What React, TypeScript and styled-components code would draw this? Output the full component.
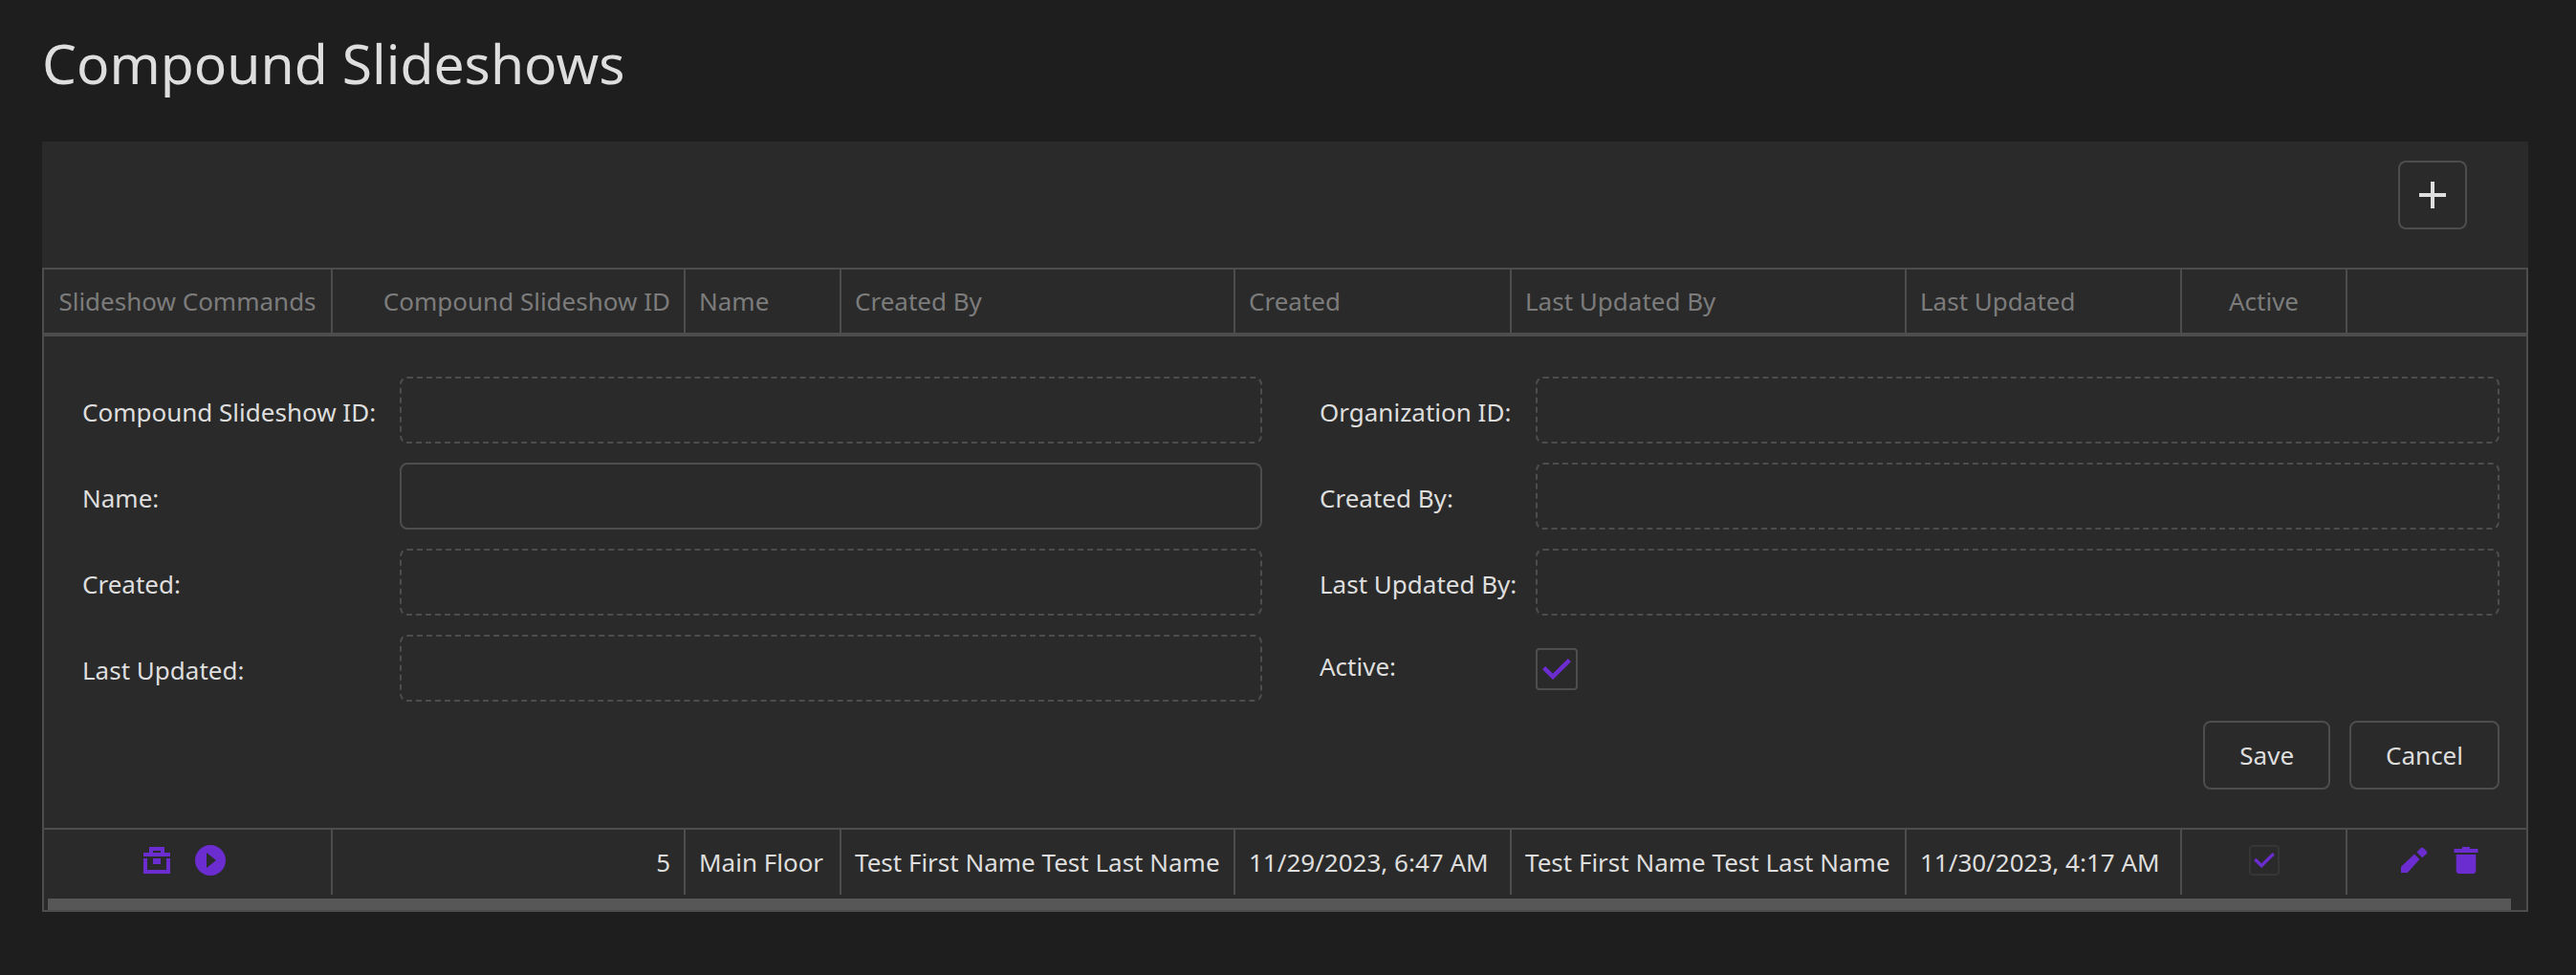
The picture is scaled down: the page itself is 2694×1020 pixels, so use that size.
import React, { useId } from "react";
import styled, { createGlobalStyle } from "styled-components";

const color = {
  page: "#1e1e1e",
  panel: "#2a2a2a",
  line: "#4d4d4d",
  faint: "#363636",
  text: "#dedede",
  muted: "#7c7c7c",
  accent: "#6b2dcf",
  thumb: "#575757",
};

const GlobalStyle = createGlobalStyle`
  *, *::before, *::after { box-sizing: border-box; }
  body {
    margin: 0;
    min-height: 100vh;
    background: ${color.page};
    color: ${color.text};
    font-family: "Noto Sans", "Open Sans", sans-serif;
    font-size: 26px;
    line-height: 36px;
  }
`;

const Page = styled.main`
  padding: 26px 50px 66px 44px;
`;

const Title = styled.h1`
  margin: 0 0 42px;
  font-size: 57px;
  line-height: 80px;
  font-weight: 400;
`;

const GridPanel = styled.section`
  background: ${color.panel};
`;

const Toolbar = styled.div`
  display: flex;
  justify-content: flex-end;
  padding: 20px 64px 40px;
`;

const Button = styled.button<{ $icon?: boolean }>`
  display: inline-flex;
  align-items: center;
  justify-content: center;
  height: 72px;
  ${(p) => (p.$icon ? "width: 72px; padding: 0;" : "padding: 0 36px;")}
  border: 2px solid ${color.line};
  border-radius: 8px;
  background: transparent;
  color: inherit;
  font: inherit;
  cursor: pointer;
`;

const GridFrame = styled.div`
  border: 2px solid ${color.line};
`;

const Table = styled.table`
  width: 100%;
  table-layout: fixed;
  border-collapse: separate;
  border-spacing: 0;
`;

const Col = styled.col<{ $width?: number }>`
  ${(p) => (p.$width ? `width: ${p.$width}px;` : "")}
`;

type Align = "left" | "right" | "center";

const HeadCell = styled.th<{ $align?: Align }>`
  height: 70px;
  padding: 0 14px;
  border-right: 2px solid ${color.line};
  border-bottom: 4px solid ${color.line};
  color: ${color.muted};
  font-weight: 400;
  text-align: ${(p) => p.$align ?? "left"};
  white-space: nowrap;
  &:last-child { border-right: 0; }
`;

const Cell = styled.td<{ $align?: Align }>`
  height: 68px;
  padding: 0 14px;
  border-right: 2px solid ${color.line};
  text-align: ${(p) => p.$align ?? "left"};
  white-space: nowrap;
  &:last-child { border-right: 0; }
`;

const FormCell = styled.td`
  padding: 42px 28px 40px 40px;
  border-bottom: 2px solid ${color.line};
`;

const FormColumns = styled.div`
  display: grid;
  grid-template-columns: 1fr 1fr;
  column-gap: 60px;
`;

const FormColumn = styled.div<{ $label: number }>`
  display: grid;
  grid-template-columns: ${(p) => p.$label}px 1fr;
  grid-auto-rows: 70px;
  row-gap: 20px;
`;

const Label = styled.label<{ $height?: number }>`
  line-height: ${(p) => p.$height ?? 74}px;
  white-space: nowrap;
`;

const TextBox = styled.input`
  width: 100%;
  height: 70px;
  padding: 0 16px;
  border: 2px solid ${color.line};
  border-radius: 8px;
  outline: 0;
  background: transparent;
  color: inherit;
  font: inherit;
  &:read-only { border-style: dashed; }
`;

const CheckHolder = styled.span<{ $size: number; $faint?: boolean }>`
  display: inline-grid;
  width: ${(p) => p.$size}px;
  height: ${(p) => p.$size}px;
  color: ${color.accent};
  > * { grid-area: 1 / 1; }
  > input {
    appearance: none;
    width: 100%;
    height: 100%;
    margin: 0;
    border: 2px solid ${(p) => (p.$faint ? color.faint : color.line)};
    border-radius: 4px;
  }
  > svg {
    place-self: center;
    pointer-events: none;
    visibility: hidden;
  }
  > input:checked + svg { visibility: visible; }
`;

const CheckField = styled.div`
  display: flex;
  padding-top: 14px;
`;

const FormActions = styled.div`
  display: flex;
  justify-content: flex-end;
  gap: 20px;
  padding-top: 20px;
`;

const Commands = styled.div<{ $gap?: number; $before?: number; $after?: number }>`
  display: flex;
  align-items: center;
  justify-content: center;
  gap: ${(p) => p.$gap ?? 20}px;
  padding: 0 ${(p) => p.$after ?? 0}px 4px ${(p) => p.$before ?? 0}px;
  color: ${color.accent};
`;

const IconButton = styled.button`
  display: inline-flex;
  align-items: center;
  justify-content: center;
  width: 36px;
  height: 36px;
  padding: 0;
  border: 0;
  background: none;
  color: inherit;
  cursor: pointer;
`;

const ScrollTrack = styled.div`
  padding: 4px 16px 0 4px;
`;

const ScrollThumb = styled.div`
  height: 12px;
  background: ${color.thumb};
`;

const PlusIcon = () => (
  <svg width="28" height="28" viewBox="0 0 28 28" fill="currentColor" aria-hidden="true">
    <path d="M12 0h4v12h12v4H16v12h-4V16H0v-4h12z" />
  </svg>
);

const CheckIcon = ({ small }: { small?: boolean }) => (
  <svg
    width={small ? 22 : 30}
    height={small ? 16 : 22}
    viewBox="0 0 30 22"
    fill="none"
    stroke="currentColor"
    strokeWidth="4.6"
    aria-hidden="true"
  >
    <path d="M1.600 9.600L11 18.800L28.400 1.600" />
  </svg>
);

const BoxIcon = () => (
  <svg width="28" height="28" viewBox="0 0 28 28" fill="currentColor" aria-hidden="true">
    <path d="M6 0h16v6h6v4H0V6h6zM10 4v2h8V4zM0 12h4v12h20V12h4v16H0zM10 12h8v6h-8z" fillRule="evenodd" />
  </svg>
);

const PlayIcon = () => (
  <svg width="32" height="32" viewBox="0 0 32 32" fill="currentColor" aria-hidden="true">
    <path d="M16 0a16 16 0 1 1 0 32a16 16 0 1 1 0-32zM12 8v16l10-8z" fillRule="evenodd" />
  </svg>
);

const PencilIcon = () => (
  <svg width="28" height="28" viewBox="0 0 28 28" fill="currentColor" aria-hidden="true">
    <path d="M0 27V20.700L14 7.500L19.500 13L6.700 27zM16.500 5.500L20.300 1.500q1.700-1.700 3.400 0L26.500 4.200q1.500 1.700 0 3.300L22.200 11.200z" />
  </svg>
);

const TrashIcon = () => (
  <svg width="26" height="28" viewBox="0 0 26 28" fill="currentColor" aria-hidden="true">
    <path d="M9 0h8v2h8.500v4H.5V2H9zM2.700 8h20.600v16.500q0 3.500-3.500 3.500H6.200q-3.500 0-3.500-3.500z" />
  </svg>
);

const columns: { title: string; width?: number; align?: Align }[] = [
  { title: "Slideshow Commands", width: 302, align: "center" },
  { title: "Compound Slideshow ID", align: "right" },
  { title: "Name", width: 163 },
  { title: "Created By", width: 412 },
  { title: "Created", width: 289 },
  { title: "Last Updated By", width: 413 },
  { title: "Last Updated", width: 288 },
  { title: "Active", width: 173, align: "center" },
  { title: "", width: 187, align: "center" },
];

function Field({ label, editable }: { label: string; editable?: boolean }) {
  const id = useId();
  return (
    <>
      <Label htmlFor={id}>{label}:</Label>
      <TextBox id={id} type="text" readOnly={!editable} />
    </>
  );
}

function ActiveField() {
  const id = useId();
  return (
    <>
      <Label htmlFor={id} $height={66}>Active:</Label>
      <CheckField>
        <CheckHolder $size={44}>
          <input id={id} type="checkbox" defaultChecked />
          <CheckIcon />
        </CheckHolder>
      </CheckField>
    </>
  );
}

export default function App() {
  return (
    <>
      <GlobalStyle />
      <Page>
        <Title>Compound Slideshows</Title>
        <GridPanel>
          <Toolbar>
            <Button $icon type="button" aria-label="Add a row"><PlusIcon /></Button>
          </Toolbar>
          <GridFrame>
            <Table>
              <colgroup>
                {columns.map((c, i) => <Col key={i} $width={c.width} />)}
              </colgroup>
              <thead>
                <tr>
                  {columns.map((c, i) => (
                    <HeadCell key={i} scope="col" $align={c.align}>{c.title}</HeadCell>
                  ))}
                </tr>
              </thead>
              <tbody>
                <tr>
                  <FormCell colSpan={9}>
                    <form onSubmit={(e) => e.preventDefault()}>
                      <FormColumns>
                        <FormColumn $label={332}>
                          <Field label="Compound Slideshow ID" />
                          <Field label="Name" editable />
                          <Field label="Created" />
                          <Field label="Last Updated" />
                        </FormColumn>
                        <FormColumn $label={226}>
                          <Field label="Organization ID" />
                          <Field label="Created By" />
                          <Field label="Last Updated By" />
                          <ActiveField />
                        </FormColumn>
                      </FormColumns>
                      <FormActions>
                        <Button type="submit">Save</Button>
                        <Button type="button">Cancel</Button>
                      </FormActions>
                    </form>
                  </FormCell>
                </tr>
                <tr>
                  <Cell>
                    <Commands $after={8}>
                      <IconButton type="button" aria-label="Manage slides"><BoxIcon /></IconButton>
                      <IconButton type="button" aria-label="Play"><PlayIcon /></IconButton>
                    </Commands>
                  </Cell>
                  <Cell $align="right">5</Cell>
                  <Cell>Main Floor</Cell>
                  <Cell>Test First Name Test Last Name</Cell>
                  <Cell>11/29/2023, 6:47 AM</Cell>
                  <Cell>Test First Name Test Last Name</Cell>
                  <Cell>11/30/2023, 4:17 AM</Cell>
                  <Cell>
                    <Commands>
                      <CheckHolder $size={32} $faint>
                        <input type="checkbox" aria-label="Active" defaultChecked />
                        <CheckIcon small />
                      </CheckHolder>
                    </Commands>
                  </Cell>
                  <Cell>
                    <Commands $gap={18} $before={6}>
                      <IconButton type="button" aria-label="Edit"><PencilIcon /></IconButton>
                      <IconButton type="button" aria-label="Delete"><TrashIcon /></IconButton>
                    </Commands>
                  </Cell>
                </tr>
              </tbody>
            </Table>
            <ScrollTrack><ScrollThumb /></ScrollTrack>
          </GridFrame>
        </GridPanel>
      </Page>
    </>
  );
}
